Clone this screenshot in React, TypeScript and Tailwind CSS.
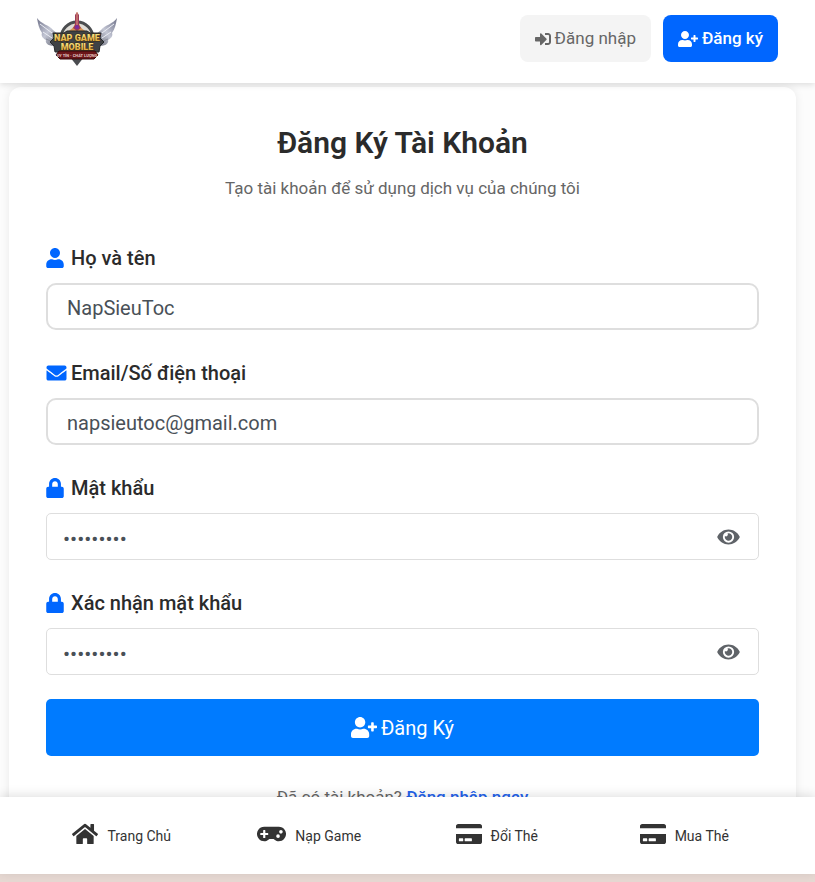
import React, { useState } from 'react';
import { FaEye, FaUser, FaEnvelope, FaLock, FaUserPlus, FaSignInAlt, FaHome, FaGamepad, FaCreditCard } from 'react-icons/fa';

interface FieldProps {
  id: string;
  label: string;
  icon: React.ReactNode;
  value: string;
  onChange: (value: string) => void;
}

const Logo = () => (
  <svg viewBox="0 0 80 56" className="w-20 h-14" role="img" aria-label="Nạp Game Mobile">
    <defs>
      <linearGradient id="gold" x1="0" y1="0" x2="0" y2="1">
        <stop offset="0" stopColor="#fbe98a" />
        <stop offset="1" stopColor="#d99a2b" />
      </linearGradient>
      <linearGradient id="wing" x1="0" y1="0" x2="1" y2="1">
        <stop offset="0" stopColor="#70738a" />
        <stop offset="0.5" stopColor="#c3c6d4" />
        <stop offset="1" stopColor="#5f626e" />
      </linearGradient>
    </defs>
    <g id="wing-left">
      <path d="M0 7C4 13 12 14 16 19L22 24V34L17 35C10 35 8 31 9 29C5 27 4 24 5 22C2 18 1 13 0 7Z" fill="url(#wing)" />
      <path d="M3 13L15 22M6 21L15 27" stroke="#eceef5" strokeWidth="1" />
      <path d="M9 28L16 31" stroke="#8b8e9b" strokeWidth="1" />
    </g>
    <use href="#wing-left" transform="matrix(-1 0 0 1 80 0)" />
    <circle cx="40" cy="27" r="16" fill="#dfdcd6" stroke="#4b4d4f" strokeWidth="3" />
    <path d="M28 21C33 20 37 17 38 12L40 9L42 12C43 17 47 20 52 21L47 23H33Z" fill="#d99652" />
    <path d="M40 1L42 4V14L44 17L40 20L36 17L38 14V4Z" fill="#9c3a58" />
    <path d="M40 1V14" stroke="#e2a07c" strokeWidth="1" />
    <circle cx="40" cy="16" r="2" fill="#7a2ba0" />
    <path d="M16 22H27L30 20H50L53 22H64L63 27L67 31L63 35L62 41H18L17 35L13 31L17 27Z" fill="#3f4245" stroke="#26292c" />
    <path d="M33 46H47L40 55Z" fill="#4a4c50" />
    <path d="M22 40H58L61 44L57 48H23L19 44Z" fill="#6b1519" stroke="#35090b" />
    <g textAnchor="middle" fontFamily="Roboto, sans-serif" fontWeight="900" stroke="#3a2a10" strokeWidth="1" paintOrder="stroke">
      <text x="40" y="30" fontSize="9" fill="url(#gold)">NAP GAME</text>
      <text x="40" y="39" fontSize="9" fill="url(#gold)">MOBILE</text>
    </g>
    <text x="40" y="46" textAnchor="middle" fontFamily="Roboto, sans-serif" fontWeight="700" fontSize="4" fill="#e3c9c5">UY TÍN - CHẤT LƯỢNG</text>
  </svg>
);

const labelClass = 'flex items-center gap-1 h-[30px] mb-[10px] text-xl font-medium text-[#2b2b2b]';

const TextField = ({ id, label, icon, value, onChange }: FieldProps) => (
  <div className="mb-7">
    <label htmlFor={id} className={labelClass}>
      {icon}
      {label}
    </label>
    <input
      id={id}
      type="text"
      value={value}
      onChange={(e) => onChange(e.target.value)}
      className="block w-full h-[47px] px-[19px] pt-0.5 text-xl text-[#495057] bg-white border-2 border-[#dedede] rounded-[10px] outline-none focus:border-[#0066ff]"
    />
  </div>
);

const PasswordField = ({ id, label, icon, value, onChange }: FieldProps) => {
  const [visible, setVisible] = useState(false);

  return (
    <div className="mb-7 last-of-type:mb-6">
      <label htmlFor={id} className={labelClass}>
        {icon}
        {label}
      </label>
      <div className="flex items-center h-[47px] bg-white border border-[#dedede] rounded-[5px] focus-within:border-[#0066ff]">
        <input
          id={id}
          type={visible ? 'text' : 'password'}
          value={value}
          onChange={(e) => onChange(e.target.value)}
          className="flex-1 min-w-0 h-full px-4 pt-1 text-[21px] text-[#495057] bg-transparent outline-none"
        />
        <button type="button" aria-label="Hiện mật khẩu" onClick={() => setVisible(!visible)} className="pl-4 pr-[18px] text-[#5f6368]">
          <FaEye viewBox="0 0 576 512" className="w-[23px] h-5" />
        </button>
      </div>
    </div>
  );
};

const navItems = [
  { label: 'Trang Chủ', icon: <FaHome viewBox="0 0 576 512" className="w-[26px] h-6 mb-[3px]" /> },
  { label: 'Nạp Game', icon: <FaGamepad viewBox="0 0 640 512" className="w-[29px] h-6 mb-[3px]" /> },
  { label: 'Đổi Thẻ', icon: <FaCreditCard viewBox="0 0 576 512" className="w-[26px] h-6 mb-[3px]" /> },
  { label: 'Mua Thẻ', icon: <FaCreditCard viewBox="0 0 576 512" className="w-[26px] h-6 mb-[3px]" /> },
];

export default function App() {
  const [name, setName] = useState('NapSieuToc');
  const [email, setEmail] = useState('napsieutoc@gmail.com');
  const [password, setPassword] = useState('matkhau12');
  const [confirm, setConfirm] = useState('matkhau12');

  return (
    <div className="h-screen flex flex-col bg-[#fcfcfc] font-[Roboto,'Noto_Sans',sans-serif]">
      <header className="relative z-10 shrink-0 h-[83px] flex items-center justify-between px-[37px] pb-1.5 bg-white shadow-[0_2px_6px_rgba(0,0,0,0.12)]">
        <a href="#home">
          <Logo />
        </a>
        <div className="flex items-center gap-3 text-[17px]">
          <a href="#login" className="flex items-center gap-1 h-[47px] px-[15px] rounded-lg bg-[#f4f4f4] text-[#666]">
            <FaSignInAlt className="w-4 h-4" />
            Đăng nhập
          </a>
          <a href="#register" className="flex items-center gap-1 h-[47px] px-[15px] rounded-lg bg-[#0066ff] text-white font-medium">
            <FaUserPlus viewBox="0 0 640 512" className="w-5 h-4" />
            Đăng ký
          </a>
        </div>
      </header>

      <main className="flex-1 min-h-0 overflow-y-auto [scrollbar-width:none] pt-1">
        <div className="ml-[9px] mr-[19px] px-[37px] pt-9 pb-10 bg-white rounded-xl shadow-[0_0_10px_rgba(0,0,0,0.08)]">
          <h1 className="text-center text-3xl leading-10 font-semibold text-[#2b2b2b]">Đăng Ký Tài Khoản</h1>
          <p className="mt-[13px] mb-[43px] text-center text-[17px] leading-6 text-[#666]">Tạo tài khoản để sử dụng dịch vụ của chúng tôi</p>

          <form onSubmit={(e) => e.preventDefault()}>
            <TextField id="name" label="Họ và tên" value={name} onChange={setName}
              icon={<FaUser viewBox="0 0 448 512" className="w-[18px] h-5 mr-[3px] text-[#0066ff]" />} />
            <TextField id="email" label="Email/Số điện thoại" value={email} onChange={setEmail}
              icon={<FaEnvelope className="w-[21px] h-5 text-[#0066ff]" />} />
            <PasswordField id="password" label="Mật khẩu" value={password} onChange={setPassword}
              icon={<FaLock viewBox="0 0 448 512" className="w-[18px] h-5 mr-[3px] text-[#0066ff]" />} />
            <PasswordField id="confirm" label="Xác nhận mật khẩu" value={confirm} onChange={setConfirm}
              icon={<FaLock viewBox="0 0 448 512" className="w-[18px] h-5 mr-[3px] text-[#0066ff]" />} />
            <button type="submit" className="flex items-center justify-center gap-1 w-full h-[57px] rounded-[5px] bg-[#007bff] text-white text-xl">
              <FaUserPlus viewBox="0 0 640 512" className="w-[26px] h-[21px]" />
              Đăng Ký
            </button>
          </form>

          <p className="mt-[29px] text-center text-[17px] leading-6 text-[#666]">
            Đã có tài khoản?{' '}
            <a href="#login" className="text-[#2563eb] font-medium">Đăng nhập ngay</a>
          </p>
        </div>
      </main>

      <nav className="relative z-10 shrink-0 h-[77px] grid grid-cols-4 pl-7 pr-[37px] bg-white shadow-[0_-2px_10px_rgba(0,0,0,0.12)]">
        {navItems.map((item) => (
          <a key={item.label} href="#" className="flex items-center justify-center gap-[9px] text-sm text-[#333]">
            {item.icon}
            {item.label}
          </a>
        ))}
      </nav>
      <div className="shrink-0 h-2 bg-[#e6d8d2]" />
    </div>
  );
}
